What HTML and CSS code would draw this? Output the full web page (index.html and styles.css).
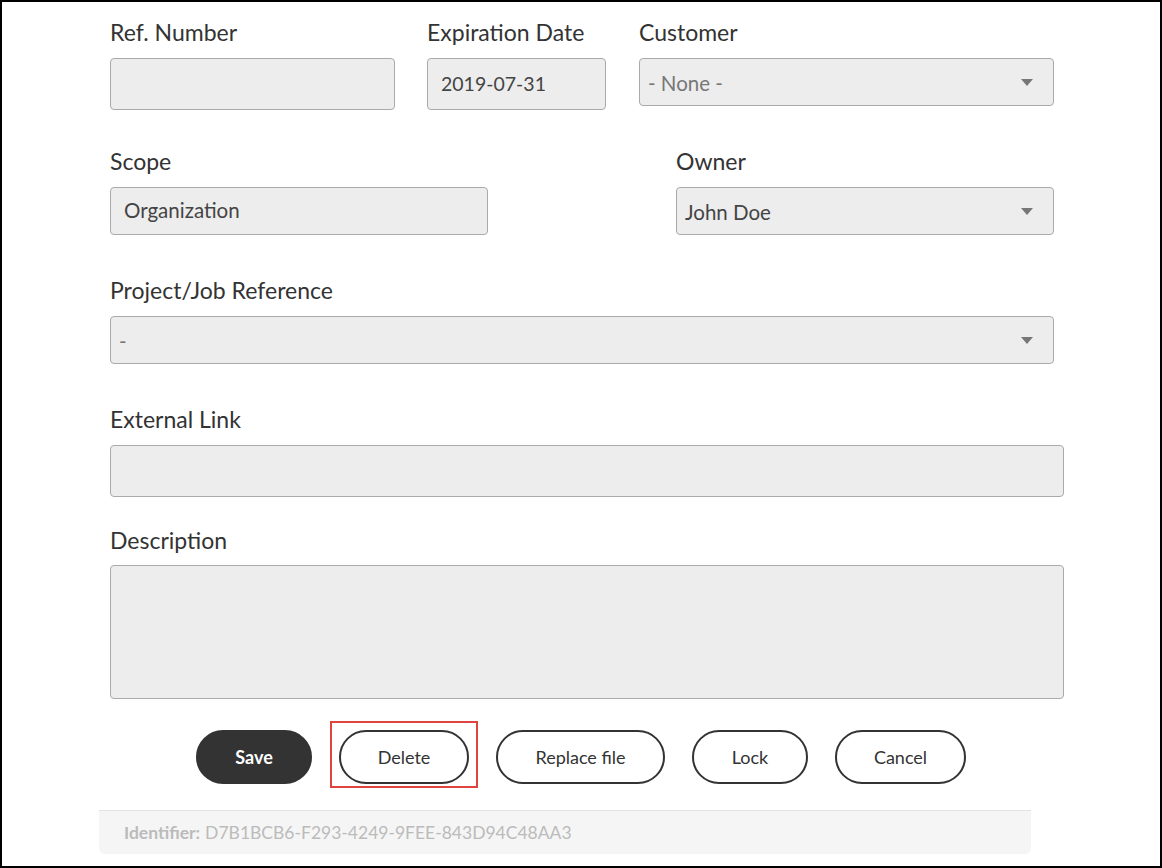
FILE: index.html
```html
<!DOCTYPE html>
<html lang="en">
<head>
    <meta charset="UTF-8">
    <meta name="viewport" content="width=device-width, initial-scale=1.0">
    <title>Document properties</title>
    <link rel="stylesheet" href="styles.css">
</head>
<body>
    <div class="page">
        <form class="doc-form">
            <div class="row row-1">
                <div class="field ref">
                    <label>Ref. Number</label>
                    <input type="text" class="input tall" value="">
                </div>
                <div class="field exp">
                    <label>Expiration Date</label>
                    <input type="text" class="input tall" value="2019-07-31">
                </div>
                <div class="field customer">
                    <label>Customer</label>
                    <div class="select muted"><span>- None -</span><i class="arrow"></i></div>
                </div>
            </div>

            <div class="row row-2">
                <div class="field scope">
                    <label>Scope</label>
                    <input type="text" class="input" value="Organization">
                </div>
                <div class="field owner">
                    <label>Owner</label>
                    <div class="select"><span>John Doe</span><i class="arrow"></i></div>
                </div>
            </div>

            <div class="row row-3">
                <div class="field wide">
                    <label>Project/Job Reference</label>
                    <div class="select muted"><span>-</span><i class="arrow"></i></div>
                </div>
            </div>

            <div class="row row-4">
                <div class="field full">
                    <label>External Link</label>
                    <input type="text" class="input tall" value="">
                </div>
            </div>

            <div class="row row-5">
                <div class="field full desc">
                    <label>Description</label>
                    <textarea class="input area"></textarea>
                </div>
            </div>
        </form>

        <div class="actions">
            <button class="btn btn-dark btn-save">Save</button>
            <span class="highlight"><button class="btn btn-delete">Delete</button></span>
            <button class="btn btn-replace">Replace file</button>
            <button class="btn btn-lock">Lock</button>
            <button class="btn btn-cancel">Cancel</button>
        </div>

        <div class="identifier">
            <b>Identifier:</b> D7B1BCB6-F293-4249-9FEE-843D94C48AA3
        </div>
    </div>
</body>
</html>
```

FILE: styles.css
```css
body {
    margin: 0;
    font-family: Lato, "Open Sans", Arial, sans-serif;
    color: #333;
    background: #fff;
}
.page {
    width: 1162px;
    height: 868px;
    box-sizing: border-box;
    border: 2px solid #000;
    padding-top: 17px;
}
.doc-form {
    padding-left: 108px;
}
.row {
    display: flex;
    align-items: flex-start;
}
.row-1 { margin-bottom: 38px; }
.row-2 { margin-bottom: 42px; }
.row-3 { margin-bottom: 42px; }
.row-4 { margin-bottom: 30px; }

.field label {
    display: block;
    font-size: 23px;
    line-height: 26px;
    margin-bottom: 13px;
    color: #333;
}
.desc label {
    margin-bottom: 12px;
}
.ref { width: 285px; margin-right: 32px; }
.exp { width: 179px; margin-right: 33px; }
.customer { width: 415px; }
.scope { width: 378px; margin-right: 188px; }
.owner { width: 378px; }
.wide { width: 944px; }
.full { width: 954px; }

.input, .select {
    display: block;
    width: 100%;
    box-sizing: border-box;
    height: 48px;
    background: #ededed;
    border: 1px solid #aaa;
    border-radius: 4px;
    font-family: inherit;
    font-size: 20.5px;
    color: #444;
    margin: 0;
}
.input {
    padding: 0 13px 3px;
    outline: none;
}
.input.tall {
    height: 52px;
    font-size: 19.5px;
    padding-bottom: 2px;
}
.input.area {
    height: 134px;
    resize: none;
    padding: 10px 13px;
}
.select {
    display: flex;
    align-items: center;
    justify-content: space-between;
    padding: 0 20px 0 8px;
}
.select span {
    padding-top: 1px;
}
.select.muted {
    color: #777;
}
.arrow {
    width: 0;
    height: 0;
    border-left: 6px solid transparent;
    border-right: 6px solid transparent;
    border-top: 7px solid #777;
}

.actions {
    display: flex;
    justify-content: center;
    align-items: center;
    gap: 27px;
    margin-top: 31px;
}
.btn {
    height: 54px;
    padding: 0;
    box-sizing: border-box;
    border: 2px solid #333;
    border-radius: 27px;
    background: #fff;
    color: #333;
    font-family: inherit;
    font-size: 18px;
    cursor: pointer;
}
.btn-save { width: 116px; }
.btn-delete { width: 130px; }
.btn-replace { width: 169px; }
.btn-lock { width: 116px; }
.btn-cancel { width: 131px; }
.btn-dark {
    background: #333;
    color: #fff;
    font-weight: bold;
}
.highlight {
    display: inline-block;
    border: 2px solid #e0443e;
    padding: 7px 7px 2px;
    margin: -9px -9px -4px;
}
.highlight .btn {
    display: block;
}

.identifier {
    margin: 26px 0 0 97px;
    width: 932px;
    height: 44px;
    box-sizing: border-box;
    padding: 0 25px;
    display: flex;
    align-items: center;
    gap: 5px;
    background: #f5f5f5;
    border-top: 1px solid #e3e3e3;
    border-radius: 0 0 6px 6px;
    color: #bbb;
    font-size: 17.5px;
}
.identifier b {
    font-weight: bold;
}
```
